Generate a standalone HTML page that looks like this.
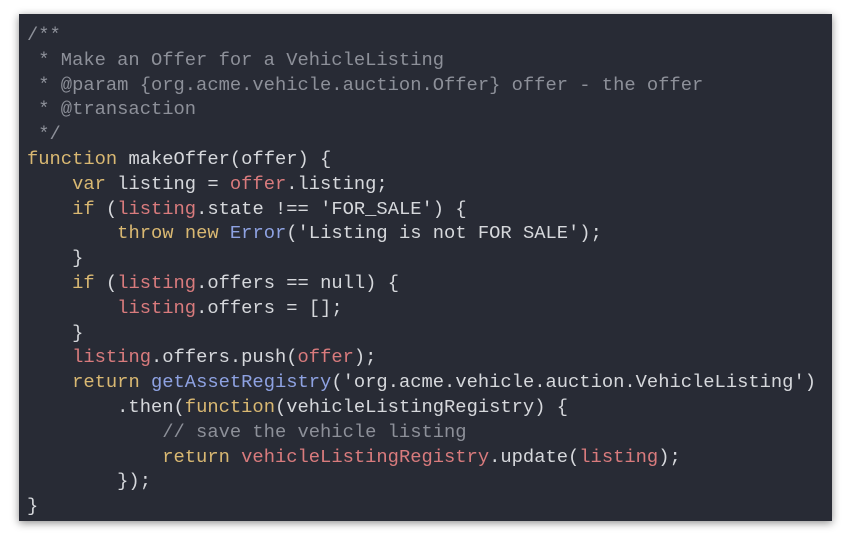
<!DOCTYPE html>
<html><head><style>
body{margin:0;width:849px;height:537px;background:#fff;overflow:hidden}
.box{position:absolute;left:19px;top:14px;width:813px;height:507px;background:#282b35;box-shadow:0 2px 8px rgba(0,0,0,.45)}
pre{margin:0;position:absolute;left:8px;top:9px;font-family:"Liberation Mono",monospace;font-size:18.8px;line-height:24.8px;color:#d6d8dc}
.c{color:#8d9099}.k{color:#d9b872}.v{color:#d97b7d}.f{color:#8ea2e2}
</style></head><body><div class="box"><pre><span class="c">/**
 * Make an Offer for a VehicleListing
 * @param {org.acme.vehicle.auction.Offer} offer - the offer
 * @transaction
 */</span>
<span class="k">function</span> makeOffer(offer) {
    <span class="k">var</span> listing = <span class="v">offer</span>.listing;
    <span class="k">if</span> (<span class="v">listing</span>.state !== 'FOR_SALE') {
        <span class="k">throw</span> <span class="k">new</span> <span class="f">Error</span>('Listing is not FOR SALE');
    }
    <span class="k">if</span> (<span class="v">listing</span>.offers == null) {
        <span class="v">listing</span>.offers = [];
    }
    <span class="v">listing</span>.offers.push(<span class="v">offer</span>);
    <span class="k">return</span> <span class="f">getAssetRegistry</span>('org.acme.vehicle.auction.VehicleListing')
        .then(<span class="k">function</span>(vehicleListingRegistry) {
            <span class="c">// save the vehicle listing</span>
            <span class="k">return</span> <span class="v">vehicleListingRegistry</span>.update(<span class="v">listing</span>);
        });
}</pre></div></body></html>
